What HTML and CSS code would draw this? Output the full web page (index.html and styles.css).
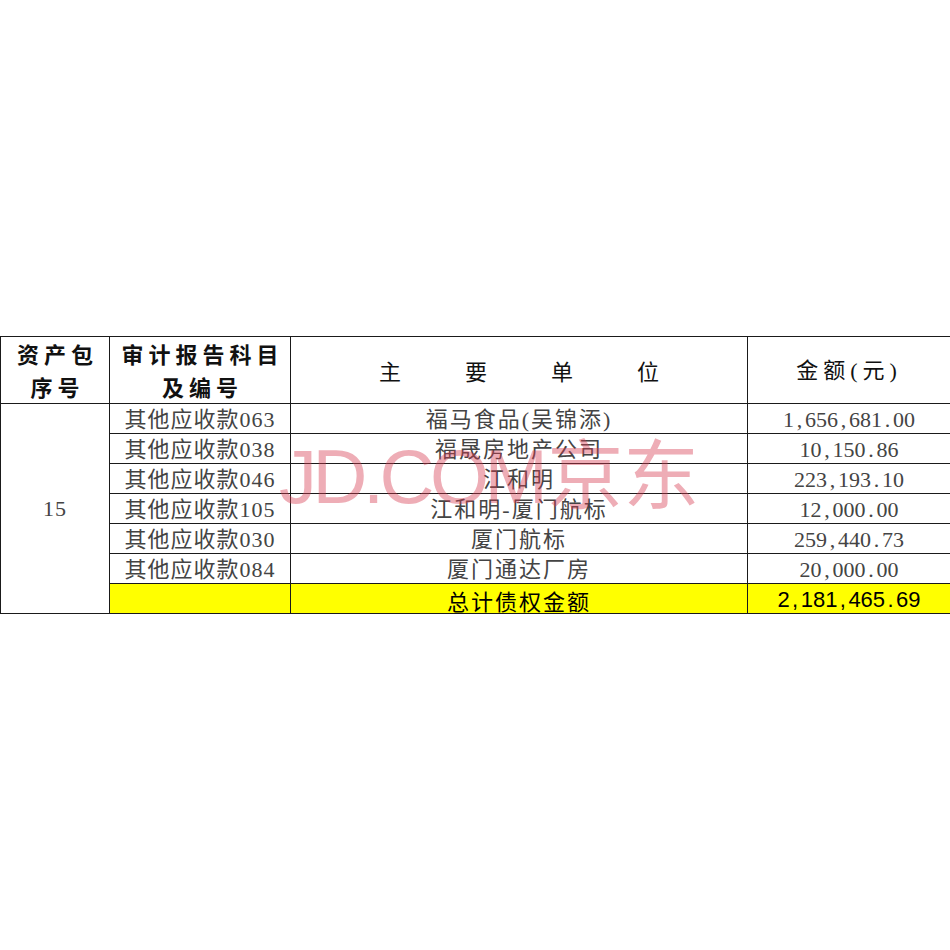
FILE: index.html
```html
<!DOCTYPE html>
<html lang="zh-CN">
<head>
<meta charset="utf-8">
<title>债权明细</title>
<link rel="stylesheet" href="styles.css">
</head>
<body>
<div class="page">
  <div class="sheet">
    <table class="grid">
      <colgroup>
        <col class="c1"><col class="c2"><col class="c3"><col class="c4">
      </colgroup>
      <thead>
        <tr class="head">
          <th class="hb">资产包<br>序号</th>
          <th class="hb">审计报告科目<br>及编号</th>
          <th><div class="spread"><span>主</span><span>要</span><span>单</span><span>位</span></div></th>
          <th class="amt-h">金额(元)</th>
        </tr>
      </thead>
      <tbody>
        <tr>
          <td class="seq" rowspan="7">15</td>
          <td class="subj">其他应收款063</td>
          <td class="unit">福马食品(吴锦添)</td>
          <td class="num">1<span class="pn">,</span>656<span class="pn">,</span>681<span class="pn">.</span>00</td>
        </tr>
        <tr>
          <td class="subj">其他应收款038</td>
          <td class="unit">福晟房地产公司</td>
          <td class="num">10<span class="pn">,</span>150<span class="pn">.</span>86</td>
        </tr>
        <tr>
          <td class="subj">其他应收款046</td>
          <td class="unit">江和明</td>
          <td class="num">223<span class="pn">,</span>193<span class="pn">.</span>10</td>
        </tr>
        <tr>
          <td class="subj">其他应收款105</td>
          <td class="unit">江和明-厦门航标</td>
          <td class="num">12<span class="pn">,</span>000<span class="pn">.</span>00</td>
        </tr>
        <tr>
          <td class="subj">其他应收款030</td>
          <td class="unit">厦门航标</td>
          <td class="num">259<span class="pn">,</span>440<span class="pn">.</span>73</td>
        </tr>
        <tr>
          <td class="subj">其他应收款084</td>
          <td class="unit">厦门通达厂房</td>
          <td class="num">20<span class="pn">,</span>000<span class="pn">.</span>00</td>
        </tr>
        <tr class="total">
          <td></td>
          <td class="total-label">总计债权金额</td>
          <td class="num total-num">2<span class="pn">,</span>181<span class="pn">,</span>465<span class="pn">.</span>69</td>
        </tr>
      </tbody>
    </table>
    <div class="watermark"><span class="wm-latin">JD.COM</span><span class="wm-cjk">京东</span></div>
  </div>
</div>
</body>
</html>
```

FILE: styles.css
```css
html, body {
  margin: 0;
  padding: 0;
  background: #ffffff;
}

.page {
  width: 950px;
  height: 950px;
  padding-top: 336px;
  box-sizing: border-box;
}

.sheet {
  position: relative;
  width: 950px;
}

.grid {
  border-collapse: collapse;
  table-layout: fixed;
  width: 950px;
  font-family: "Liberation Serif", "Noto Sans CJK SC", serif;
  font-size: 22px;
  color: #444444;
}

.c1 { width: 109px; }
.c2 { width: 181px; }
.c3 { width: 457px; }
.c4 { width: 203px; }

.grid th,
.grid td {
  border: 1px solid #1a1a1a;
  padding: 0;
  text-align: center;
}

.head {
  height: 66px;
}

.head th {
  font-weight: normal;
  color: #111;
  line-height: 33px;
  vertical-align: middle;
}

.head th.hb {
  font-family: "Noto Sans CJK SC", sans-serif;
  font-weight: bold;
  letter-spacing: 5px;
  padding-left: 5px;
}

.spread {
  display: flex;
  justify-content: center;
  gap: 64px;
  font-family: "Noto Sans CJK SC", sans-serif;
}

.amt-h {
  letter-spacing: 5px;
  padding-left: 5px;
}

.grid tbody tr {
  height: 30px;
}

.grid tbody td {
  line-height: 26px;
  vertical-align: bottom;
  white-space: nowrap;
}

.grid tbody td.seq {
  vertical-align: middle;
  line-height: 26px;
  letter-spacing: 1px;
}

.subj {
  letter-spacing: 1px;
  padding-left: 1px;
}

.unit {
  letter-spacing: 2px;
  padding-left: 2px;
}

.num {
  letter-spacing: 0;
}

.pn {
  display: inline-block;
  width: 0.5em;
  text-align: center;
}

.total td {
  background: #ffff00;
}

.total-label {
  font-family: "Noto Sans CJK SC", sans-serif;
  color: #000;
  letter-spacing: 2px;
  padding-left: 2px;
}

.total-num {
  font-family: "Liberation Sans", "Noto Sans", sans-serif;
  color: #000;
}

.watermark {
  position: absolute;
  left: 279px;
  top: 96px;
  font-family: "Liberation Sans", "Noto Sans CJK SC", sans-serif;
  color: rgba(215, 60, 80, 0.42);
  white-space: nowrap;
  line-height: 1;
  pointer-events: none;
}

.wm-latin {
  font-size: 76px;
  letter-spacing: -4.5px;
}

.wm-cjk {
  font-family: "Noto Sans CJK SC", sans-serif;
  font-size: 76px;
  margin-left: 4px;
}
```
